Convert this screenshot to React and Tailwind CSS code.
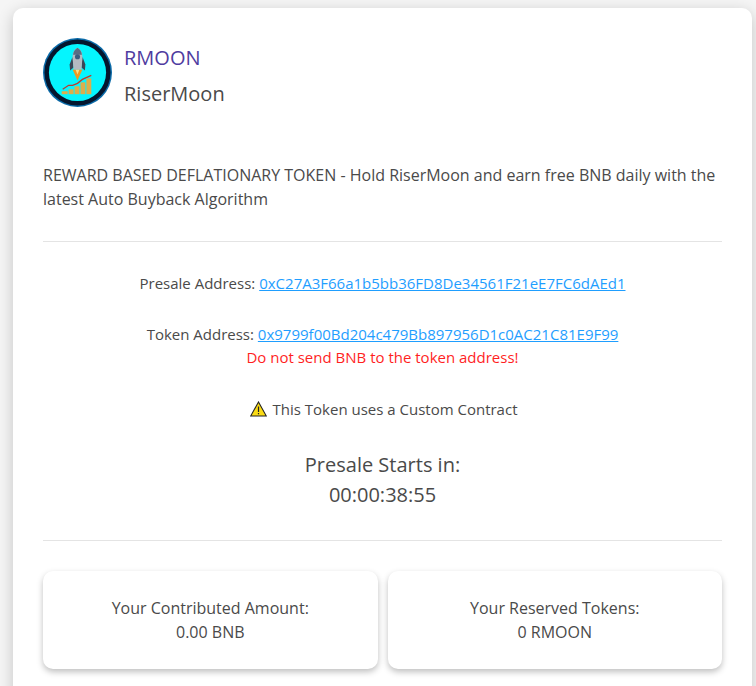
import React from 'react';

function Logo() {
  return (
    <svg width="69" height="69" viewBox="0 0 70 70" className="shrink-0">
      <circle cx="35" cy="35" r="35" fill="#0a6aa8" />
      <circle cx="35" cy="35" r="33.5" fill="#04162e" />
      <circle cx="35" cy="35" r="29" fill="#05f5fe" />
      <path d="M30 32 L40 32 L35 43 Z" fill="#f09a20" />
      <path d="M33 32 L37 32 L35 37 Z" fill="#fbe08a" />
      <path d="M30 19 L27 27 L27.5 33 L31 30 Z" fill="#3a4656" />
      <path d="M40 19 L43 27 L42.5 33 L39 30 Z" fill="#3a4656" />
      <path d="M35 10 C31 12 30 16 30 20 L31 32 L39 32 L40 20 C40 16 39 12 35 10 Z" fill="#b4bac1" />
      <path d="M35 10 C32 12 31 14 30.5 17 L39.5 17 C39 14 38 12 35 10 Z" fill="#5a6e84" />
      <circle cx="35" cy="19" r="2.6" fill="#3d5d7e" />
      <path d="M20 52 L26 48 L30 48 L35 46 L40 42 L49 38" fill="none" stroke="#c0392b" strokeWidth="1.3" />
      <rect x="19" y="54" width="6" height="3" fill="#dcae4c" />
      <rect x="26" y="52" width="5" height="5" fill="#dcae4c" />
      <rect x="32" y="49" width="5" height="8" fill="#dcae4c" />
      <rect x="38" y="45" width="5" height="12" fill="#dcae4c" />
      <rect x="44" y="41" width="5" height="16" fill="#dcae4c" />
    </svg>
  );
}

function WarningIcon() {
  return (
    <svg width="17" height="16" viewBox="0 0 17 16" className="shrink-0">
      <path d="M8.5 1 L16.3 15 L0.7 15 Z" fill="#fadb14" stroke="#222" strokeWidth="1.1" strokeLinejoin="miter" />
      <rect x="7.9" y="5.5" width="1.2" height="5.5" fill="#222" />
      <rect x="7.9" y="12" width="1.2" height="1.3" fill="#222" />
    </svg>
  );
}

function StatCard({ label, value }) {
  return (
    <div className="flex-1 h-[98px] bg-white rounded-[10px] shadow-[0_3px_6px_rgba(0,0,0,0.25)] flex flex-col items-center justify-center text-[16px] leading-[24px] text-[#4a4a4a]">
      <div>{label}</div>
      <div>{value}</div>
    </div>
  );
}

export default function App() {
  return (
    <div className="w-[756px] h-[686px] overflow-hidden bg-[#f5f5f5] pt-2 pl-[13px] pr-1 font-['Open_Sans',sans-serif]">
      <div className="bg-white rounded-t-[10px] shadow-[0_4px_16px_rgba(0,0,0,0.2)] h-[700px] px-[30px] pt-[30px]">
        <div className="flex items-start gap-3">
          <Logo />
          <div className="mt-[2px]">
            <div className="text-[20px] leading-[36px] text-[#4f3ca0]">RMOON</div>
            <div className="text-[20px] leading-[36px] text-[#4a4a4a]">RiserMoon</div>
          </div>
        </div>

        <p className="mt-[51px] text-[16px] leading-[24px] text-[#4a4a4a]">
          REWARD BASED DEFLATIONARY TOKEN - Hold RiserMoon and earn free BNB daily with the latest Auto Buyback Algorithm
        </p>

        <hr className="mt-[30px] border-t border-[#e4e4e4]" />

        <div className="mt-[29px] text-center text-[15px] leading-[24px] text-[#4a4a4a]">
          Presale Address: <a href="#" className="text-[#1f9eff] underline">0xC27A3F66a1b5bb36FD8De34561F21eE7FC6dAEd1</a>
        </div>

        <div className="mt-[28px] text-center text-[15px] leading-[23px] text-[#4a4a4a]">
          <div>
            Token Address: <a href="#" className="text-[#1f9eff] underline">0x9799f00Bd204c479Bb897956D1c0AC21C81E9F99</a>
          </div>
          <div className="text-[#ff1f1f]">Do not send BNB to the token address!</div>
        </div>

        <div className="mt-[28px] pl-[2px] flex items-center justify-center gap-1.5 text-[15px] leading-[24px] text-[#4a4a4a]">
          <WarningIcon />
          <span>This Token uses a Custom Contract</span>
        </div>

        <div className="mt-[29px] text-center text-[20px] leading-[30px] text-[#4a4a4a]">
          <div>Presale Starts in:</div>
          <div>00:00:38:55</div>
        </div>

        <hr className="mt-[30px] border-t border-[#e4e4e4]" />

        <div className="mt-[30px] flex gap-[10px]">
          <StatCard label="Your Contributed Amount:" value="0.00 BNB" />
          <StatCard label="Your Reserved Tokens:" value="0 RMOON" />
        </div>
      </div>
    </div>
  );
}
